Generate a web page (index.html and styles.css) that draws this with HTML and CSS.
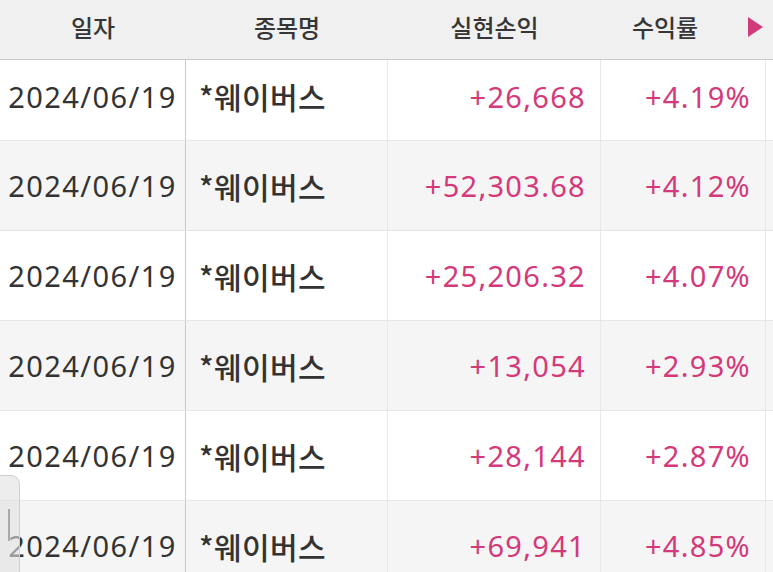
FILE: index.html
```html
<!DOCTYPE html>
<html lang="ko">
<head>
<meta charset="utf-8">
<link rel="stylesheet" href="styles.css">
</head>
<body>
<div class="screen">
  <div class="head">
    <div class="hc c1">일자</div>
    <div class="hc c2">종목명</div>
    <div class="hc c3">실현손익</div>
    <div class="hc c4"><span class="hl">수익률</span><svg class="tri" width="17" height="22" viewBox="0 0 17 22"><polygon points="1,1 16,11 1,21" fill="#d03c7b"/></svg></div>
  </div>
  <div class="row first">
    <div class="cell c1">2024/06/19</div>
    <div class="cell c2">*웨이버스</div>
    <div class="cell c3 up">+26,668</div>
    <div class="cell c4 up">+4.19%</div>
    <div class="cell c5"></div>
  </div>
  <div class="row alt">
    <div class="cell c1">2024/06/19</div>
    <div class="cell c2">*웨이버스</div>
    <div class="cell c3 up">+52,303.68</div>
    <div class="cell c4 up">+4.12%</div>
    <div class="cell c5"></div>
  </div>
  <div class="row">
    <div class="cell c1">2024/06/19</div>
    <div class="cell c2">*웨이버스</div>
    <div class="cell c3 up">+25,206.32</div>
    <div class="cell c4 up">+4.07%</div>
    <div class="cell c5"></div>
  </div>
  <div class="row alt">
    <div class="cell c1">2024/06/19</div>
    <div class="cell c2">*웨이버스</div>
    <div class="cell c3 up">+13,054</div>
    <div class="cell c4 up">+2.93%</div>
    <div class="cell c5"></div>
  </div>
  <div class="row">
    <div class="cell c1">2024/06/19</div>
    <div class="cell c2">*웨이버스</div>
    <div class="cell c3 up">+28,144</div>
    <div class="cell c4 up">+2.87%</div>
    <div class="cell c5"></div>
  </div>
  <div class="row alt">
    <div class="cell c1">2024/06/19</div>
    <div class="cell c2">*웨이버스</div>
    <div class="cell c3 up">+69,941</div>
    <div class="cell c4 up">+4.85%</div>
    <div class="cell c5"></div>
  </div>
  <div class="handle"><span class="grip"></span></div>
</div>
</body>
</html>
```
FILE: styles.css
```css
html, body {
  margin: 0;
  padding: 0;
  background: #ffffff;
}
.screen {
  position: relative;
  width: 773px;
  height: 572px;
  overflow: hidden;
  font-family: "Noto Sans", "Noto Sans CJK KR", sans-serif;
  color: #333333;
}
.head {
  display: flex;
  height: 59px;
  background: #f0f0f0;
  border-bottom: 1px solid #c9c9c9;
  align-items: center;
}
.hc {
  box-sizing: border-box;
  text-align: center;
  font-family: "Noto Sans CJK KR", sans-serif;
  font-size: 24px;
  font-weight: 500;
  color: #363636;
  padding-bottom: 7px;
}
.head .c4 {
  display: flex;
  align-items: center;
  gap: 18px;
  padding-right: 2px;
}
.hl {
  flex: 1;
  text-align: center;
}
.tri {
  display: block;
  margin-top: 2px;
}
.row {
  display: flex;
  height: 90px;
  border-bottom: 1px solid #e6e6e6;
  box-sizing: border-box;
  background: #ffffff;
}
.row.alt {
  background: #f5f5f5;
}
.row.first {
  height: 81px;
}
.row.first .cell {
  padding-bottom: 8px;
}
.cell {
  box-sizing: border-box;
  display: flex;
  align-items: center;
  font-size: 29px;
  letter-spacing: 1.3px;
  border-right: 1px solid #e8e8e8;
}
.c1 { width: 186px; }
.c2 { width: 202px; }
.c3 { width: 213px; }
.c4 { width: 165px; }
.c5 { flex: 1; border-right: none; }
.cell.c1 {
  justify-content: center;
  border-right-color: #c9c9c9;
  letter-spacing: 1.4px;
}
.cell.c2 {
  padding-left: 13px;
  font-family: "Noto Sans CJK KR", sans-serif;
  font-size: 30px;
  letter-spacing: 0.4px;
  font-weight: 500;
}
.cell.c3, .cell.c4 {
  justify-content: flex-end;
  padding-right: 14px;
}
.up {
  color: #d4397a;
}
.handle {
  position: absolute;
  left: -1px;
  top: 475px;
  width: 19px;
  height: 110px;
  border: 1px solid #cfcfcf;
  border-top-right-radius: 9px;
  background: rgba(225, 225, 225, 0.6);
}
.grip {
  position: absolute;
  left: 8px;
  top: 33px;
  width: 2px;
  height: 32px;
  background: #a9a9a9;
}
```
